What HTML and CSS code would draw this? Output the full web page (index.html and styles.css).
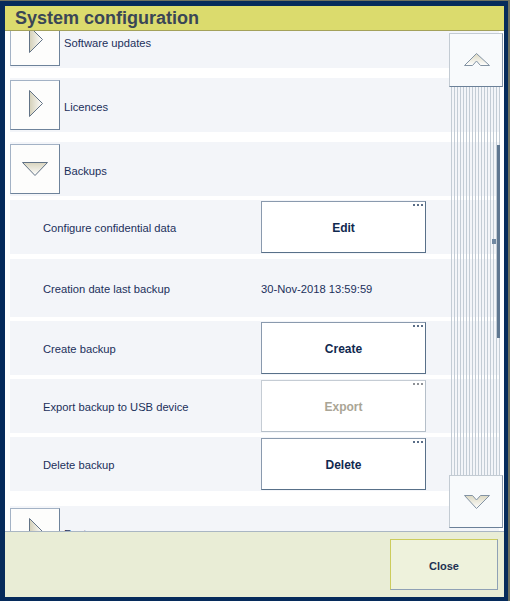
FILE: index.html
```html
<!DOCTYPE html>
<html>
<head>
<meta charset="utf-8">
<link rel="stylesheet" href="styles.css">
</head>
<body>
<div class="window">
  <div class="titlebar">System configuration</div>
  <div class="content">
    <div class="list">
      <div class="row section first">
        <div class="expander"><svg class="tri-right" width="48" height="48" viewBox="0 0 48 48"><defs><linearGradient id="gr1" x1="0" y1="0" x2="1" y2="0"><stop offset="0" stop-color="#d4d0b8"/><stop offset="1" stop-color="#ffffff"/></linearGradient></defs><polygon points="18.5,9.5 31.5,22.5 18.5,35.5" fill="url(#gr1)" stroke="#627386" stroke-width="1"/></svg></div>
        <span class="label">Software updates</span>
      </div>
      <div class="row section gap10">
        <div class="expander"><svg width="48" height="48" viewBox="0 0 48 48"><defs><linearGradient id="gr2" x1="0" y1="0" x2="1" y2="0"><stop offset="0" stop-color="#d4d0b8"/><stop offset="1" stop-color="#ffffff"/></linearGradient></defs><polygon points="18.5,9.5 31.5,22.5 18.5,35.5" fill="url(#gr2)" stroke="#627386" stroke-width="1"/></svg></div>
        <span class="label">Licences</span>
      </div>
      <div class="row section gap10">
        <div class="expander"><svg width="48" height="48" viewBox="0 0 48 48"><defs><linearGradient id="gr3" x1="0" y1="0" x2="0" y2="1"><stop offset="0" stop-color="#d8d4be"/><stop offset="1" stop-color="#ffffff"/></linearGradient></defs><polygon points="11.5,17.5 36.5,17.5 24,30.5" fill="url(#gr3)" stroke="#627386" stroke-width="1"/></svg></div>
        <span class="label">Backups</span>
      </div>
      <div class="row item gap4">
        <span class="item-label">Configure confidential data</span>
        <button class="btn">Edit<span class="dots"></span></button>
      </div>
      <div class="row item value-row gap5">
        <span class="item-label">Creation date last backup</span>
        <span class="value">30-Nov-2018 13:59:59</span>
      </div>
      <div class="row item gap4">
        <span class="item-label">Create backup</span>
        <button class="btn">Create<span class="dots"></span></button>
      </div>
      <div class="row item gap4">
        <span class="item-label">Export backup to USB device</span>
        <button class="btn disabled">Export<span class="dots"></span></button>
      </div>
      <div class="row item gap4">
        <span class="item-label">Delete backup</span>
        <button class="btn">Delete<span class="dots"></span></button>
      </div>
      <div class="row section gap15">
        <div class="expander"><svg width="48" height="48" viewBox="0 0 48 48"><defs><linearGradient id="gr4" x1="0" y1="0" x2="1" y2="0"><stop offset="0" stop-color="#d4d0b8"/><stop offset="1" stop-color="#ffffff"/></linearGradient></defs><polygon points="18.5,9.5 31.5,22.5 18.5,35.5" fill="url(#gr4)" stroke="#627386" stroke-width="1"/></svg></div>
        <span class="label last-label">Features</span>
      </div>
    </div>
    <div class="scrollbar">
      <div class="sb-btn up"><svg width="52" height="52" viewBox="0 0 52 52"><defs><linearGradient id="cu" x1="0" y1="0" x2="0" y2="1"><stop offset="0" stop-color="#dcd8c2"/><stop offset="1" stop-color="#ffffff"/></linearGradient></defs><polygon points="14.5,31.5 26.5,19.5 39.5,31.5 30.5,31.5 26.5,27 22.5,31.5" fill="url(#cu)" stroke="#8393a4" stroke-width="1"/></svg></div>
      <div class="track"><span class="thumb"></span><span class="marker"></span></div>
      <div class="sb-btn down"><svg width="52" height="51" viewBox="0 0 52 51"><defs><linearGradient id="cd" x1="0" y1="0" x2="0" y2="1"><stop offset="0" stop-color="#dcd8c2"/><stop offset="1" stop-color="#ffffff"/></linearGradient></defs><polygon points="14.5,19.5 22.5,19.5 26.5,24 30.5,19.5 39.5,19.5 26.5,32.5" fill="url(#cd)" stroke="#8393a4" stroke-width="1"/></svg></div>
    </div>
  </div>
  <div class="footer">
    <button class="close">Close</button>
  </div>
</div>
</body>
</html>
```
FILE: styles.css
```css
html, body {
  margin: 0;
  padding: 0;
}
body {
  background: #6e7160;
  width: 510px;
  height: 601px;
  overflow: hidden;
  font-family: "Liberation Sans", Arial, sans-serif;
}
.window {
  box-sizing: border-box;
  width: 508px;
  height: 600px;
  margin-top: 1px;
  border-style: solid;
  border-color: #062b5b;
  border-width: 5px 4px 4px 5px;
  background: #ffffff;
  display: flex;
  flex-direction: column;
}
.titlebar {
  box-sizing: border-box;
  height: 25px;
  padding: 2px 0 0 10px;
  line-height: 21px;
  background: #dbdb6d;
  border-bottom: 1px solid #a3a15b;
  color: #3a4656;
  font-weight: bold;
  font-size: 18px;
  flex: none;
}
.content {
  position: relative;
  height: 500px;
  flex: none;
  overflow: hidden;
  padding: 0 5px;
  background: #ffffff;
}
.list {
  display: flex;
  flex-direction: column;
}
.row {
  background: #f3f5f9;
  flex: none;
}
.first { margin-top: -17px; }
.gap10 { margin-top: 10px; }
.gap4 { margin-top: 4px; }
.gap5 { margin-top: 5px; }
.gap15 { margin-top: 15px; }

.section {
  height: 54px;
  display: flex;
  align-items: center;
}
.expander {
  box-sizing: border-box;
  width: 50px;
  height: 50px;
  border: 1px solid;
  border-color: #a3b2c5 #6e839b #6e839b #a3b2c5;
  background: #fdfdfc;
  flex: none;
}
.expander svg { display: block; }
.label, .item-label, .value {
  font-size: 11.2px;
  color: #1b305b;
}
.label { margin-left: 4px; padding-top: 3px; }
.label.last-label { padding-top: 1px; }

.item {
  height: 54px;
  display: grid;
  grid-template-columns: 251px 165px;
  align-items: center;
}
.value-row { height: 58px; }
.item-label { padding-left: 33px; padding-top: 2px; }
.value { padding-top: 2px; }

.btn {
  position: relative;
  box-sizing: border-box;
  height: 52px;
  width: 165px;
  margin: 0;
  padding: 2px 0 0 0;
  border: 1px solid;
  border-color: #8a9aae #587089 #587089 #8a9aae;
  background: #ffffff;
  font-family: "Liberation Sans", Arial, sans-serif;
  font-weight: bold;
  font-size: 12px;
  color: #10294f;
}
.btn.disabled {
  border-color: #c5ccd4 #b5bfc9 #b5bfc9 #c5ccd4;
  color: #aaa595;
}
.dots {
  position: absolute;
  top: 2px;
  right: 2px;
  width: 10px;
  height: 2px;
  background: repeating-linear-gradient(to right, #5a6e88 0 2px, transparent 2px 4px);
}
.btn.disabled .dots {
  background: repeating-linear-gradient(to right, #8e9196 0 2px, transparent 2px 4px);
}

.scrollbar {
  position: absolute;
  top: 2px;
  right: 1px;
  bottom: 3px;
  width: 54px;
  display: flex;
  flex-direction: column;
}
.sb-btn {
  box-sizing: border-box;
  width: 54px;
  border: 1px solid;
  border-color: #c3cbd3 #8696a8 #6b8098 #c3cbd3;
  background: #f8fafc;
  flex: none;
}
.sb-btn svg { display: block; }
.sb-btn.up { height: 54px; }
.sb-btn.down { height: 53px; }
.track {
  position: relative;
  flex: 1;
  margin: 0 3px 0 2px;
  background: repeating-linear-gradient(to right, #c3ccd5 0 1px, transparent 1px 3px);
}
.thumb {
  position: absolute;
  left: 46px;
  top: 58px;
  width: 3px;
  height: 193px;
  background: #5f7791;
}
.marker {
  position: absolute;
  left: 41px;
  top: 152px;
  width: 4px;
  height: 5px;
  background: #7088a2;
}

.footer {
  box-sizing: border-box;
  flex: 1;
  border-top: 1px solid #a9b6c3;
  background: #e9edd6;
  display: flex;
  justify-content: flex-end;
  align-items: flex-start;
  padding: 7px 6px 0 0;
}
.close {
  box-sizing: border-box;
  width: 108px;
  height: 51px;
  margin: 0;
  padding: 2px 0 0 0;
  border: 1px solid;
  border-color: #cccc5c #8fa1b5 #8fa1b5 #cccc5c;
  background: #eef2dc;
  font-family: "Liberation Sans", Arial, sans-serif;
  font-weight: bold;
  font-size: 11px;
  color: #1d3152;
}
```
